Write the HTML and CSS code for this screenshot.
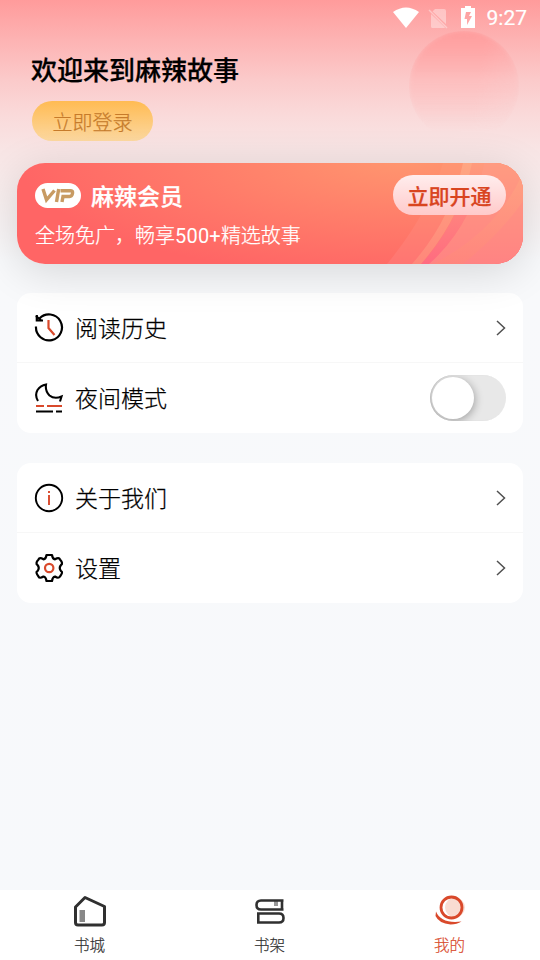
FILE: index.html
```html
<!DOCTYPE html>
<html lang="zh-CN">
<head>
<meta charset="utf-8">
<title>我的</title>
<link rel="stylesheet" href="styles.css">
</head>
<body>
<div class="app">
  <div class="orb"></div>
  <div class="statusbar">
    <svg class="wifi" width="26" height="21" viewBox="0 0 26 21"><path d="M0 5Q13-4 26 5L13 21Z" fill="#fff"/></svg>
    <svg class="sim" width="20" height="21" viewBox="0 0 20 21"><path d="M7 1h9q2 0 2 2v13L4.500 3.500ZM3 6l14 13.500q-.5.500-1.500.500h-11q-1.500 0-1.500-1.500Z" fill="#fff" opacity=".38"/><path d="M1 2l18 18" stroke="#fff" stroke-width="1.500" opacity=".38"/></svg>
    <svg class="battery" width="14" height="22" viewBox="0 0 14 22"><path fill-rule="evenodd" d="M4 0h6v2h4v20H0V2h4ZM5 6L3.500 13H6v6l5-9H8l2-4Z" fill="#fff"/></svg>
    <span class="clock">9:27</span>
  </div>
  <header class="welcome">
    <h1>欢迎来到麻辣故事</h1>
    <button class="login">立即登录</button>
  </header>
  <section class="vip">
    <svg class="rays" width="160" height="101" viewBox="0 0 160 101">
      <defs>
        <linearGradient id="band" x1="0" y1="0" x2="0" y2="1"><stop offset="0" stop-color="#ff9672"/><stop offset="1" stop-color="#ff7572"/></linearGradient>
        <linearGradient id="deep" x1="0" y1="0" x2="0" y2="1"><stop offset="0" stop-color="#ff9b7c"/><stop offset="1" stop-color="#ff6b80"/></linearGradient>
        <linearGradient id="light" x1="0" y1="0" x2="0" y2="1"><stop offset="0" stop-color="#ffa682"/><stop offset="1" stop-color="#ff877a"/></linearGradient>
      </defs>
      <path d="M80 0Q66 50 24 101H160V0Z" fill="url(#band)"/>
      <path d="M108 0Q98 57 58 101H160V0Z" fill="url(#deep)"/>
      <path d="M100 0Q88 57 49 101H58Q98 55 109 0Z" fill="url(#light)"/>
      <path d="M121 0Q110 62 66 101H160V0Z" fill="#ff9b86" opacity=".5"/>
      <path d="M160 10Q134 68 70 101H100Q140 68 160 38Z" fill="url(#light)" opacity=".6"/>
    </svg>
    <div class="vip-info">
      <div class="vip-title">
        <svg width="46" height="25" viewBox="0 0 46 25"><rect width="46" height="25" rx="12.500" fill="#fff"/><g fill="none" stroke="#c89b63" stroke-width="3.400"><path d="M8 6L11.500 16.800 19.500 7.500"/><path d="M23.700 6L21.500 19"/><path d="M25.500 7.700H36Q38 7.700 37.500 10.500T34.500 13.500H28L27 19"/></g></svg>
        <span>麻辣会员</span>
      </div>
      <p>全场免广，畅享<b>500+</b>精选故事</p>
    </div>
    <button class="subscribe">立即开通</button>
  </section>
  <section class="menu">
    <div class="row">
      <svg class="icon" width="30" height="30" viewBox="0 0 30 30" fill="none" stroke="#000" stroke-width="2.200"><path d="M2 13.500A13 13 0 1 0 5.500 5.500"/><path d="M2.800 2V7.500H9"/><path d="M2 3l5 4.500" /><path d="M14.500 7V15L20.500 22" stroke="#d9492b"/></svg>
      <span class="label">阅读历史</span>
      <svg class="chev" width="10" height="16" viewBox="0 0 10 16"><path d="M1 1l7.500 7L1 15" fill="none" stroke="#505050" stroke-width="1.500"/></svg>
    </div>
    <div class="row">
      <svg class="icon" width="30" height="30" viewBox="0 0 30 30" fill="none" stroke="#000" stroke-width="2.100"><path d="M4 18Q.5 12.500 3.500 7 6.500 2.500 12 1.500 11 8 15.500 12.500 20.500 16.500 27.500 13.500L26 18.500"/><path d="M2 23h8m3 0h15" stroke="#d9492b"/><path d="M2 28.500h17m3 0h6"/></svg>
      <span class="label">夜间模式</span>
      <span class="switch"><i></i></span>
    </div>
  </section>
  <section class="menu">
    <div class="row">
      <svg class="icon" width="30" height="30" viewBox="0 0 30 30" fill="none" stroke="#000" stroke-width="1.900"><circle cx="15" cy="15" r="13.200"/><path d="M15 8v2m0 2v10" stroke="#d9492b"/></svg>
      <span class="label">关于我们</span>
      <svg class="chev" width="10" height="16" viewBox="0 0 10 16"><path d="M1 1l7.500 7L1 15" fill="none" stroke="#505050" stroke-width="1.500"/></svg>
    </div>
    <div class="row">
      <svg class="icon" width="30" height="30" viewBox="0 0 30 30" fill="none" stroke="#000" stroke-width="2.200"><path d="M12.500 2H18Q18.500 6 21 6.300 25 4 26 6.500 29.500 10.500 27 12 24.500 15 27 18 29.500 19 26 23.500 24.500 26 21 23.500 18.500 24 18 28H12.500Q12 24 9.500 23.500 5.500 26 4.500 23.500 1 19 3.500 18 6 15 3.500 12 1 10.500 4.500 6.500 5.500 4 9.500 6.300 12 6 12.500 2Z" stroke-linejoin="round"/><circle cx="15.200" cy="15" r="4.200" stroke="#d9492b"/></svg>
      <span class="label">设置</span>
      <svg class="chev" width="10" height="16" viewBox="0 0 10 16"><path d="M1 1l7.500 7L1 15" fill="none" stroke="#505050" stroke-width="1.500"/></svg>
    </div>
  </section>
  <nav class="tabs">
    <a class="tab"><svg width="34" height="34" viewBox="0 0 34 34"><path d="M2.500 12L12 2.500 31.500 11.500V27.500Q31.500 30 29 30H5Q2.500 30 2.500 27.500Z" fill="none" stroke="#303030" stroke-width="3" stroke-linejoin="round"/><path d="M6.500 15H12V27H6.500Z" fill="#888"/></svg><span>书城</span></a>
    <a class="tab"><svg width="34" height="34" viewBox="0 0 34 34"><path d="M21 6h4v5h-4Z" fill="#999"/><g fill="none" stroke="#303030" stroke-width="2.600"><path d="M30.500 5.500H8Q3.500 5.500 3.500 10T8 14.500H30.500M29 5V14"/><path d="M4 18.500H26Q30.500 18.500 30.500 23T26 27.500H4M5.300 18V27"/></g></svg><span>书架</span></a>
    <a class="tab active"><svg width="34" height="34" viewBox="0 0 34 34"><circle cx="22" cy="12.500" r="10" fill="#f9dcd2"/><circle cx="18.500" cy="12.500" r="10.500" fill="none" stroke="#d9492b" stroke-width="2.800"/><path d="M3 16.500Q8 29 28.500 26.500 24 29.500 17.500 29.500 6 28.500 2.500 21Z" fill="#d9492b"/></svg><span>我的</span></a>
  </nav>
</div>
</body>
</html>
```
FILE: styles.css
```css
* { box-sizing: border-box; }
body { margin: 0; font-family: Roboto, "Noto Sans CJK SC", sans-serif; color: #000; }
button { border: 0; padding: 0; font: inherit; }
svg { display: block; flex: none; }
.app {
  position: relative; height: 960px; overflow: hidden;
  display: flex; flex-direction: column;
  background: linear-gradient(#ff9b9b 0, #fdb3b3 40px, #fbcaca 80px, #fadada 115px, #f8e5e5 150px, #f8eeee 195px, #f8f9fb 260px, #f7f9fb 100%);
}
.orb {
  position: absolute; left: 409px; top: 31px; width: 110px; height: 110px; border-radius: 50%;
  background: linear-gradient(rgba(255,155,155,.9), rgba(255,180,180,.5) 45%, rgba(255,210,205,0) 90%);
  filter: blur(2px);
  -webkit-mask-image: linear-gradient(100deg, #000 60%, rgba(0,0,0,.35));
  mask-image: linear-gradient(100deg, #000 60%, rgba(0,0,0,.35));
}
.statusbar { height: 36px; display: flex; align-items: center; justify-content: flex-end; padding-right: 13px; position: relative; }
.wifi { margin-right: 9px; margin-top: -2px; }
.sim { margin-right: 13px; }
.battery { margin-right: 12px; margin-top: -2px; }
.clock { color: #fff; font-size: 21px; line-height: 38px; font-weight: 400; -webkit-text-stroke: .2px; }
.welcome { height: 127px; padding: 15px 32px 0 31px; flex: none; position: relative; }
h1 { margin: 0 0 10px; font-size: 26px; line-height: 40px; font-weight: 500; -webkit-text-stroke: .25px; }
.login { display: block; margin-left: 1px; width: 121px; height: 40px; border-radius: 20px; background: linear-gradient(#ffbb53, #fcd8a0); color: #c67b2b; font-size: 20px; font-weight: 300; line-height: 40px; padding-top: 2px; -webkit-text-stroke: .25px; }
.vip {
  position: relative; flex: none; display: flex; justify-content: space-between;
  height: 101px; margin: 0 17px 29px; padding: 12px 17px 0; border-radius: 28px;
  background: radial-gradient(ellipse 390px 120px at 390px -5px, #ff976f, #ff6565);
  box-shadow: 0 8px 44px rgba(0,0,0,.14);
}
.rays { position: absolute; right: 0; top: 0; border-radius: 0 28px 28px 0; }
.vip-info { position: relative; color: #fff; padding-left: 1px; }
.vip-title { display: flex; align-items: center; gap: 10px; height: 40px; font-size: 23px; font-weight: 500; -webkit-text-stroke: .25px; }
.vip p { margin: 5px 0 0; font-size: 20px; font-weight: 300; line-height: 32px; white-space: nowrap; -webkit-text-stroke: .25px; }
.vip p b { font-weight: 400; -webkit-text-stroke: 0; letter-spacing: .2px; }
.subscribe { position: relative; width: 113px; height: 40px; border-radius: 20px; background: linear-gradient(#ffeded, #ffcaca); color: #d9451f; font-size: 21px; line-height: 40px; font-weight: 500; padding-top: 2px; -webkit-text-stroke: .25px; }
.menu { flex: none; margin: 0 17px 30px; border-radius: 14px; background: #fff; }
.row { height: 70px; display: flex; align-items: center; padding: 0 17px 1px; }
.row + .row { box-shadow: 0 -1px #f7f7f7; }
.icon { margin-right: 11px; }
.label { flex: 1; font-size: 23px; font-weight: 300; line-height: 34px; padding-top: 4px; -webkit-text-stroke: .25px; }
.switch { width: 76px; height: 46px; border-radius: 23px; background: #e8e8e8; overflow: hidden; padding: 2px; box-shadow: inset 1px 0 1px #ccc; }
.switch i { display: block; width: 42px; height: 42px; border-radius: 50%; background: #fff; box-shadow: 1px 2px 8px rgba(0,0,0,.3); }
.tabs { margin-top: auto; height: 70px; background: #fff; display: flex; }
.tab { flex: 1; display: flex; flex-direction: column; align-items: center; padding-top: 5px; color: #303030; font-size: 15.500px; font-weight: 300; line-height: 24px; -webkit-text-stroke: .2px; }
.tab span { margin-top: 5px; margin-right: 1px; }
.tab.active { color: #d9492b; }
```
